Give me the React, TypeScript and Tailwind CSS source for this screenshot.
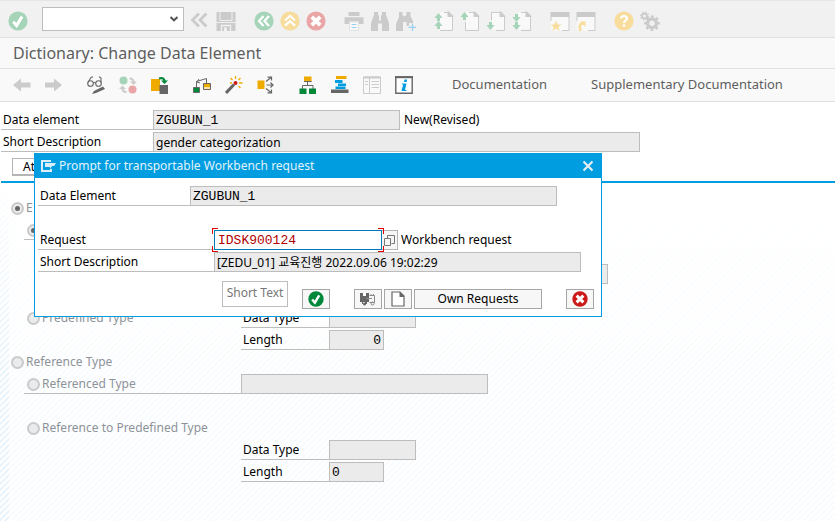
import type { ReactNode } from "react";
import clsx from "clsx";

const G = "#cbcbcb";
const D = "#666666";

function Svg({ size = 20, children }: { size?: number; children: ReactNode }) {
  return (
    <svg width={size} height={size} viewBox={`0 0 ${size} ${size}`} fill="none" aria-hidden="true" className="block shrink-0">
      {children}
    </svg>
  );
}

const CheckMark = ({ fill, size = 20 }: { fill: string; size?: number }) => (
  <svg width={size} height={size} viewBox="0 0 20 20" fill="none" aria-hidden="true" className="block shrink-0">
    <circle cx="10" cy="10" r="9.6" fill={fill} />
    <path d="M5.2 10.6 8.6 14.6 14 5.4" stroke="#fff" strokeWidth="3" />
  </svg>
);

const CrossMark = ({ fill, size = 20 }: { fill: string; size?: number }) => (
  <svg width={size} height={size} viewBox="0 0 20 20" fill="none" aria-hidden="true" className="block shrink-0">
    <circle cx="10" cy="10" r="9.6" fill={fill} />
    <path d="M5.8 5.8 14.2 14.2M14.2 5.8 5.8 14.2" stroke="#fff" strokeWidth="3.8" />
  </svg>
);

const Page = ({ children }: { children: ReactNode }) => (
  <Svg>
    <path d="M5.5 .9H15L18.6 4.8V18.5H5.5Z" fill="#f9f9f9" />
    {children}
  </Svg>
);
const pageFold = <path d="M13.5 .5H15L19.4 5V6H13.5Z" fill={G} />;
const up = (y: number) => <path key={y} d={`M4.5 ${y}L8.6 ${y + 5}H6V${y + 8}H3V${y + 5}H.4Z`} fill="#a5d4b8" />;
const down = (y: number) => <path key={y} d={`M4.5 ${y + 8}L8.6 ${y + 3}H6V${y}H3V${y + 3}H.4Z`} fill="#a5d4b8" />;

const barGroups: { name: string; icon: ReactNode }[][] = [
  [
    { name: "Collapse", icon: <Svg><path d="M9 2.5 2.5 9 9 15.5M16.5 2.5 10 9 16.5 15.5" stroke={G} strokeWidth="2.8" /></Svg> },
    {
      name: "Save",
      icon: (
        <Svg>
          <path d="M.5 1H19.5V20H.5Z" fill={G} />
          <path d="M4 1V9.5H16V1" stroke="#f1f1f1" />
          <path d="M.5 11.5H19.5" stroke="#f1f1f1" />
          <path d="M5.5 20V14.5H14.5V20" stroke="#f1f1f1" strokeWidth="1.4" />
          <path d="M8 16.5H11V20H8Z" fill="#f1f1f1" />
        </Svg>
      ),
    },
  ],
  [
    { name: "Back", icon: <Svg><circle cx="10" cy="10" r="9.6" fill="#a5d4b8" /><path d="M9.5 5 5 10 9.5 15M15 5 10.5 10 15 15" stroke="#fff" strokeWidth="2.3" /></Svg> },
    { name: "Exit", icon: <Svg><circle cx="10" cy="10" r="9.6" fill="#f7dc9c" /><path d="M5 9.5 10 5 15 9.5M5 14.7 10 10.2 15 14.7" stroke="#fff" strokeWidth="2.3" /></Svg> },
    { name: "Cancel", icon: <CrossMark fill="#eaa6a6" /> },
  ],
  [
    {
      name: "Print",
      icon: (
        <Svg>
          <path d="M4.5 1H15.5V5H4.5Z" fill={G} />
          <path d="M.5 6.2H19.5V13H15V10.5H5V13H.5Z" fill={G} />
          <path d="M5.5 11H14.5V19.5H5.5Z" fill="#f9f9f9" stroke="#e2e2e2" />
          <path d="M7.5 13.5H12.5M7.5 16.5H12.5" stroke="#9bd0ee" />
        </Svg>
      ),
    },
    { name: "Find", icon: <Svg><path d="M4 1H8V3.5L9 5V9.5H11V5L12 3.5V1H16V4L19 12V20H12V12.5H8V20H1V12L4 4Z" fill={G} /></Svg> },
    {
      name: "Find next",
      icon: (
        <Svg>
          <path d="M3 1H6.5V4L8.5 5.5 10.5 4V1H14.5V5L17 10V12H13V15H10.5V11H7V20H0V13L3 6Z" fill={G} />
          <path d="M16.5 12.5V20M12.5 16.3H20" stroke="#9bd0ee" strokeWidth="1.3" />
        </Svg>
      ),
    },
  ],
  [
    { name: "First page", icon: <Page><path d="M10 1.5H14.5L18.5 5.5V19.5H6" stroke={G} />{pageFold}{up(2)}{up(10)}</Page> },
    { name: "Previous page", icon: <Page><path d="M9 1.5H14.5L18.5 5.5V19.5H5.5V11" stroke={G} />{pageFold}{up(1)}</Page> },
    { name: "Next page", icon: <Page><path d="M5.5 9V1.5H14.5L18.5 5.5V19.5H10" stroke={G} />{pageFold}{down(11)}</Page> },
    { name: "Last page", icon: <Page><path d="M9 1.5H14.5L18.5 5.5V19.5H9" stroke={G} />{pageFold}{down(3)}{down(11)}</Page> },
  ],
  [
    {
      name: "New session",
      icon: (
        <Svg>
          <path d="M.5 1H19.5V6H.5Z" fill={G} />
          <path d="M1 6V19.5H19V6" fill="#f9f9f9" />
          <path d="M1 6V10M19 6V19.5H12" stroke={G} />
          <path d="M6 9.5 7.5 13.5H11.5L8.3 16 9.7 20 6 17.5 2.3 20 3.7 16 .5 13.5H4.5Z" fill="#f7dc9c" />
        </Svg>
      ),
    },
    {
      name: "Create shortcut",
      icon: (
        <Svg>
          <path d="M.5 1H19.5V6H.5Z" fill={G} />
          <path d="M1 6V19.5H19V6" fill="#f9f9f9" />
          <path d="M1 6V10M19 6V19.5H12" stroke={G} />
          <path d="M4.5 20C3 15 4 12.5 7 12.5" stroke="#f7dc9c" strokeWidth="2.8" />
          <path d="M4 10.5H9.5V16Z" fill="#f7dc9c" />
        </Svg>
      ),
    },
  ],
  [
    {
      name: "Help",
      icon: (
        <Svg>
          <circle cx="10" cy="10" r="9.6" fill="#f7dc9c" />
          <path d="M7 7.5C7 4.3 13 4.3 13 7.5 13 9.5 10 9.3 10 12" stroke="#fff" strokeWidth="2.2" />
          <path d="M8.8 13.5H11.2V15.7H8.8Z" fill="#fff" />
        </Svg>
      ),
    },
    {
      name: "Customize local layout",
      icon: (
        <Svg>
          <circle cx="4.5" cy="5" r="2.4" stroke={G} strokeWidth="1.6" />
          <circle cx="4.5" cy="5" r="3.8" stroke={G} strokeWidth="1.4" strokeDasharray="1.49 1.49" />
          <circle cx="12" cy="12.3" r="4.4" stroke={G} strokeWidth="3.4" />
          <circle cx="12" cy="12.3" r="6.7" stroke={G} strokeWidth="2.4" strokeDasharray="2.63 2.63" strokeDashoffset="1.3" />
        </Svg>
      ),
    },
  ],
];

const toolGroups: { name: string; icon: ReactNode }[][] = [
  [
    { name: "Previous object", icon: <Svg size={18}><path d="M0 9 8 2.5V6.5H17.500V11.5H8V15.5Z" fill={G} /></Svg> },
    { name: "Next object", icon: <Svg size={18}><path d="M17 9 9 2.5V6.5H0V11.5H9V15.5Z" fill={G} /></Svg> },
  ],
  [
    {
      name: "Display/Change",
      icon: (
        <Svg size={18}>
          <circle cx="3.5" cy="7.5" r="2.8" stroke={D} strokeWidth="1.1" />
          <circle cx="11.5" cy="7.5" r="2.8" stroke={D} strokeWidth="1.1" />
          <path d="M6.3 7C7 6.3 8 6.3 8.7 7M1 6.5 4 1.5 6 .8M14 6.5V2L12 .8" stroke={D} strokeWidth="1.1" />
          <path d="M16 10.5 18 13 9 17 5 18 7 15Z" fill={D} />
        </Svg>
      ),
    },
    {
      name: "Active/Inactive",
      icon: (
        <Svg size={18}>
          <circle cx="4.5" cy="4.5" r="4" fill="#a5d4b8" />
          <circle cx="13.500" cy="13.5" r="4" fill="#eaa6a6" />
          <path d="M10.5 2.5C13.5 2.5 14.5 4 14.5 6M7.5 16C4.500 16 3.5 14.5 3.5 12.5" stroke={G} strokeWidth="2" />
          <path d="M11 5.5H18L14.5 9ZM0 13H7L3.5 9.5Z" fill={G} />
        </Svg>
      ),
    },
    {
      name: "Other object",
      icon: (
        <Svg size={18}>
          <path d="M0 3H9V15H0Z" fill="#f0ab00" />
          <path d="M8.5 9H17V18H8.5Z" fill={D} />
          <path d="M8 2.5C11.5 1.5 13.5 2.500 13.5 5" stroke="#00883a" strokeWidth="2.2" />
          <path d="M10 4.5H17L13.5 8Z" fill="#00883a" />
        </Svg>
      ),
    },
  ],
  [
    {
      name: "Where-used list",
      icon: (
        <Svg size={18}>
          <path d="M.5 11.5H6.5V16.5H.5Z" fill="#00883a" stroke={D} />
          <path d="M10.5 7.5H17.5V13.5H10.500Z" fill="#f0ab00" stroke={D} />
          <path d="M11 11H17V13H11Z" fill="#fbe3a2" />
          <path d="M3.5 11V5.5L13.5 2.5V7M6 3 3.8 6 7 7" stroke={D} />
        </Svg>
      ),
    },
    {
      name: "Activate",
      icon: (
        <Svg size={18}>
          <path d="M1 17 9 8.5" stroke={D} strokeWidth="3" />
          <circle cx="10.5" cy="7" r="2" fill="#cc1919" />
          <path d="M10.5 0V3M5.500 2 7.5 4M15.5 2 13.5 4M14 7H17.5M13.5 10 15.5 12M5 7H7" stroke="#f0ab00" strokeWidth="1.3" />
        </Svg>
      ),
    },
    {
      name: "Append structure",
      icon: (
        <Svg size={18}>
          <path d="M.5 4.5H7.5V13H.5Z" fill="#f0ab00" />
          <path d="M9 5.5 14 1.5M10.5 1.2H14.5V4.5M9.5 9H16M13.5 6.5 16 9 13.5 11.5M9 12.5 14 16.5M14.5 13.5V16.8H10.5" stroke={D} strokeWidth="1.2" />
        </Svg>
      ),
    },
  ],
  [
    {
      name: "Hierarchy",
      icon: (
        <Svg size={18}>
          <path d="M5 .5H12.5V6H5Z" fill="#f0ab00" />
          <path d="M5 5.5H12.5M8.5 6V9M3.5 13V9.5H14V13" stroke={D} />
          <path d="M.5 12.5H7.5V18H.5ZM10 12.5H17V18H10Z" fill="#00883a" />
        </Svg>
      ),
    },
    {
      name: "Object list",
      icon: (
        <Svg size={18}>
          <path d="M5 0H15.5V3H5Z" fill="#f0ab00" />
          <path d="M4 4H11.5V7H4ZM7 7.5H15V10H7ZM4.5 10.500H14.5V13H4.5Z" fill="#009de0" />
          <path d="M0 13.5H17.5V17H0Z" fill={D} />
        </Svg>
      ),
    },
    {
      name: "Details",
      icon: (
        <Svg size={18}>
          <path d="M.5 1H17.5V17.5H.5Z" fill="#f9f9f9" stroke={G} />
          <path d="M.5 1.5H17.5" stroke={G} strokeWidth="2" />
          <path d="M6.5 2V17M2 5.5H5M2 8.5H5M8.5 5.5H16M8.5 8.5H16M8.5 11.5H16" stroke={G} />
        </Svg>
      ),
    },
    {
      name: "Information",
      icon: (
        <Svg size={18}>
          <path d="M.8 1H17.2V17.2H.8Z" fill="#fff" stroke={D} strokeWidth="1.4" />
          <path d="M0 1.2H18" stroke={D} strokeWidth="2" />
          <path d="M9.5 3.5H12.2L11.7 6H9Z" fill="#009de0" />
          <path d="M7 7.5H11.5L10 14H11.5L11.3 15H6.5L6.7 14 8.2 8.5H6.8Z" fill="#009de0" />
        </Svg>
      ),
    },
  ],
];

const line = "border-[#bdbdbd]";
const mono = "font-['Liberation_Mono','Noto_Sans_CJK_KR',monospace] text-[13px]";

function Field({ id, label, value = "", className }: { id: string; label?: string; value?: string; className: string }) {
  return (
    <input
      id={id}
      aria-label={label}
      readOnly
      value={value}
      className={clsx("h-5 min-w-0 rounded-none border bg-[#ebebeb] px-[2px] text-black outline-none", line, className)}
    />
  );
}

function Caption({ htmlFor, className, children }: { htmlFor: string; className: string; children: ReactNode }) {
  return (
    <label htmlFor={htmlFor} className={clsx("h-5 shrink-0 border-b pl-[2px] leading-5 whitespace-nowrap", line, className)}>
      {children}
    </label>
  );
}

function Choice({ group, text, name, checked = false }: { group: string; text?: string; name?: string; checked?: boolean }) {
  return (
    <label className="flex h-5 items-center gap-[2px] whitespace-nowrap text-[#8d9299]">
      <input
        type="radio"
        name={group}
        aria-label={name}
        disabled
        defaultChecked={checked}
        className="grid size-[13px] shrink-0 appearance-none place-items-center rounded-full border-2 border-[#cacaca] bg-[#e9ebec] before:size-[5px] before:rounded-full checked:before:bg-[#666666]"
      />
      {text}
    </label>
  );
}

const dialogButton = "mt-2 flex h-5 items-center justify-center border border-[#a6a6a6] bg-[#f7f7f7]";

function RequestDialog() {
  return (
    <div
      role="dialog"
      aria-labelledby="dialog-title"
      className="absolute top-[153px] left-[34px] w-[568px] border border-[#009de0] bg-white pb-[7px]"
    >
      <header className="flex h-6 items-center bg-[#009de0] pr-[7px] pl-[6px] text-[#e2f3fc]">
        <svg width="15" height="12" viewBox="0 0 15 12" fill="none" aria-hidden="true">
          <path d="M10 1H1V11H10V9" stroke="#d9eef9" strokeWidth="2" />
          <path d="M4 3H15L13 6H11L9 9V7H4Z" fill="#d9eef9" />
        </svg>
        <h2 id="dialog-title" className="grow pl-[3px] leading-5">Prompt for transportable Workbench request</h2>
        <button type="button" aria-label="Close">
          <svg width="12" height="12" viewBox="0 0 12 12" fill="none">
            <path d="M1.5 1.5 10.5 10.5M10.5 1.5 1.5 10.5" stroke="#e4eef3" strokeWidth="2.2" />
          </svg>
        </button>
      </header>

      <div className="flex pt-2 pl-[3px]">
        <Caption htmlFor="dialog-element" className="w-[152px]">Data Element</Caption>
        <Field id="dialog-element" value="ZGUBUN_1" className={clsx("w-[367px]", mono)} />
      </div>

      <div className="flex pt-6 pl-[3px]">
        <Caption htmlFor="request" className="w-[176px]">Request</Caption>
        <div className="relative">
          <input
            id="request"
            defaultValue="IDSK900124"
            className={clsx("block h-5 w-[168px] rounded-none border border-[#0079b8] bg-white px-[3px] text-[#b00000] outline-none", mono)}
          />
          <span className="absolute -top-[2px] -left-[2px] size-[6px] border-t border-l border-[#e00000]" />
          <span className="absolute -top-[2px] -right-[2px] size-[6px] border-t border-r border-[#e00000]" />
          <span className="absolute -bottom-[2px] -left-[2px] size-[6px] border-b border-l border-[#e00000]" />
          <span className="absolute -right-[2px] -bottom-[2px] size-[6px] border-r border-b border-[#e00000]" />
        </div>
        <button type="button" aria-label="Possible entries" className="flex h-5 w-4 items-center justify-center border border-l-0 border-[#b5b5b5] bg-[#f7f7f7]">
          <svg width="11" height="11" viewBox="0 0 11 11" fill="none">
            <path d="M3.5 3.5V.5H10.5V8.5H7.5M.5 3.5H6.5V10.5H.5Z" stroke="#777" />
          </svg>
        </button>
        <span className="pl-[3px] leading-5">Workbench request</span>
      </div>

      <div className="flex pt-[2px] pl-[3px]">
        <Caption htmlFor="dialog-description" className="w-[176px]">Short Description</Caption>
        <Field id="dialog-description" value="[ZEDU_01] 교육진행 2022.09.06 19:02:29" className="w-[367px]" />
      </div>

      <div className="flex items-start pt-[9px] pr-[7px] pl-[187px]">
        <button type="button" className="h-[26px] w-[66px] border border-[#bdbdbd] bg-white pb-[2px] whitespace-nowrap text-[#777777]">
          Short Text
        </button>
        <button type="button" aria-label="Continue" className={clsx(dialogButton, "ml-[14px] w-7")}>
          <CheckMark fill="#00883a" size={16} />
        </button>
        <button type="button" aria-label="Transport" className={clsx(dialogButton, "ml-6 w-7")}>
          <svg width="16" height="14" viewBox="0 0 16 14" fill="none">
            <path d="M0 1H9V10H7V12H5V10H3V12H2V10H0Z" fill={D} />
            <path d="M3 1H6V4H3Z" fill="#fff" />
            <path d="M9.5 3.5H14.5V10.5H9.5M11 2V4M13.5 2V4M6 6.5H12" stroke="#888" />
            <circle cx="12.5" cy="11.5" r="1.5" stroke="#888" />
            <circle cx="4.5" cy="12" r="1.5" fill={D} />
          </svg>
        </button>
        <button type="button" aria-label="Create request" className={clsx(dialogButton, "ml-[2px] w-7")}>
          <svg width="14" height="16" viewBox="0 0 14 16" fill="none">
            <path d="M1 1H9L13 5V15H1Z" fill="#fff" stroke={D} strokeWidth="1.2" />
            <path d="M8.5 .5 13.5 6H8.5Z" fill={D} />
          </svg>
        </button>
        <button type="button" className={clsx(dialogButton, "ml-[2px] w-32")}>Own Requests</button>
        <button type="button" aria-label="Cancel" className={clsx(dialogButton, "ml-auto w-7")}>
          <CrossMark fill="#cc1919" size={16} />
        </button>
      </div>
    </div>
  );
}

export default function App() {
  return (
    <div className="relative flex min-h-screen flex-col bg-white font-['Noto_Sans','Noto_Sans_CJK_KR',sans-serif] text-[12px] text-black">
      <header className="flex h-[38px] items-center border-t border-b border-t-[#e6e6e6] border-b-[#e0e0e0] bg-[#f1f1f1] pt-1 pl-2">
        <button type="button" aria-label="Enter"><CheckMark fill="#a5d4b8" /></button>
        <div className="relative ml-[14px]">
          <select aria-label="Command field" className="mb-1 block h-6 w-[142px] appearance-none rounded-none border border-[#bdbdbd] bg-white outline-none">
            <option value=""></option>
          </select>
          <svg width="8" height="6" viewBox="0 0 8 6" fill="none" className="pointer-events-none absolute top-[9px] right-[6px]">
            <path d="M.5 1 4 4.3 7.5 1" stroke="#555" strokeWidth="2" />
          </svg>
        </div>
        <div className="flex gap-[18px] pl-[6px]">
          {barGroups.map((group, i) => (
            <div key={i} className="flex gap-[6px]">
              {group.map((b) => (
                <button key={b.name} type="button" aria-label={b.name}>{b.icon}</button>
              ))}
            </div>
          ))}
        </div>
      </header>

      <div className="flex h-[31px] items-center border-b border-[#e0e0e0] bg-[#f9f9f9] pl-[13px]">
        <h1 className="text-[16px] leading-6 text-[#5e5e5e]">Dictionary: Change Data Element</h1>
      </div>

      <div className="flex h-[33px] items-center border-b border-[#e0e0e0] bg-[#f9f9f9] pl-[13px] text-[13px] text-[#5e5e5e]">
        <div className="flex gap-6">
          {toolGroups.map((group, i) => (
            <div key={i} className="flex gap-[14px]">
              {group.map((b) => (
                <button key={b.name} type="button" aria-label={b.name}>{b.icon}</button>
              ))}
            </div>
          ))}
        </div>
        <button type="button" className="ml-[39px]">Documentation</button>
        <button type="button" className="ml-11">Supplementary Documentation</button>
      </div>

      <main className="flex grow flex-col">
        <div className="flex flex-col gap-[2px] pt-2 pl-px">
          <div className="flex">
            <Caption htmlFor="element" className="w-[152px]">Data element</Caption>
            <Field id="element" value="ZGUBUN_1" className={clsx("w-[247px]", mono)} />
            <span className="pl-1 leading-5">New(Revised)</span>
          </div>
          <div className="flex">
            <Caption htmlFor="description" className="w-[152px]">Short Description</Caption>
            <Field id="description" value="gender categorization" className="w-[487px]" />
          </div>
        </div>

        <nav className="ml-px border-b-2 border-[#009de0] pt-[6px] pb-[5px] pl-[11px]">
          <button type="button" className="flex h-[18px] w-20 items-center border border-b-2 border-[#b5b5b5] bg-white px-[10px]">
            At
          </button>
        </nav>

        <section className="flex grow bg-[linear-gradient(to_bottom,#fffffff2,#ffffff33_60%),linear-gradient(135deg,#e3f1fa_25%,#ffffff00_25%_50%,#e3f1fa_50%_75%,#ffffff00_75%)] bg-[size:100%_100%,6px_6px]">
          <div className="flex grow flex-col gap-[2px] bg-[linear-gradient(to_right,#ffffff00_9px,#ffffffbf_9px)] pt-[15px]">
            <div className="pl-[11px]"><Choice group="category" text="E" checked /></div>
            <div className="flex">
              <div className={clsx("ml-6 h-5 w-[217px] border-b pl-[3px]", line)}>
                <Choice group="elementary" name="Domain" checked />
              </div>
              <Field id="domain" label="Domain" className="w-[247px]" />
            </div>
            <div className="h-5" />
            <div className="pl-[241px]"><Field id="domain-text" label="Domain description" className="block w-[367px]" /></div>
            <div className="h-5" />
            <div className="flex">
              <div className="w-[241px] pl-[27px]"><Choice group="elementary" text="Predefined Type" /></div>
              <Caption htmlFor="built-in-type" className="w-[88px]">Data Type</Caption>
              <Field id="built-in-type" className="w-[87px]" />
            </div>
            <div className="flex pl-[241px]">
              <Caption htmlFor="built-in-length" className="w-[88px]">Length</Caption>
              <Field id="built-in-length" value="0" className={clsx("w-[55px] text-right", mono)} />
            </div>
            <div className="pl-[11px]"><Choice group="category" text="Reference Type" /></div>
            <div className="flex">
              <div className={clsx("ml-6 h-5 w-[217px] border-b pl-[3px]", line)}>
                <Choice group="reference" text="Referenced Type" />
              </div>
              <Field id="referenced" label="Referenced type name" className="w-[247px]" />
            </div>
            <div className="h-5" />
            <div className="pl-[27px]"><Choice group="reference" text="Reference to Predefined Type" /></div>
            <div className="flex pl-[241px]">
              <Caption htmlFor="reference-type" className="w-[88px]">Data Type</Caption>
              <Field id="reference-type" className="w-[87px]" />
            </div>
            <div className="flex pl-[241px]">
              <Caption htmlFor="reference-length" className="w-[88px]">Length</Caption>
              <Field id="reference-length" value="0" className={clsx("w-[55px]", mono)} />
            </div>
          </div>
        </section>
      </main>

      <RequestDialog />
    </div>
  );
}
